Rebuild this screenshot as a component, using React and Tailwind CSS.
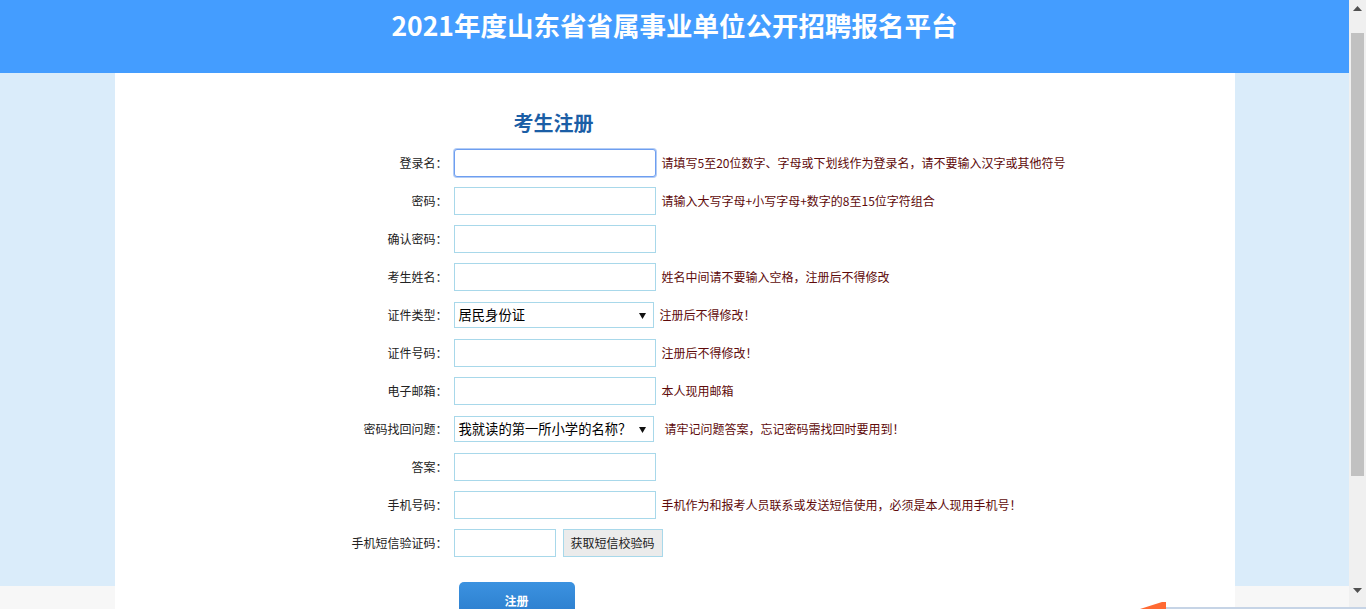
import React from 'react';

const rows = [
  { label: '登录名：', focus: true, hint: '请填写5至20位数字、字母或下划线作为登录名，请不要输入汉字或其他符号' },
  { label: '密码：', hint: '请输入大写字母+小写字母+数字的8至15位字符组合' },
  { label: '确认密码：' },
  { label: '考生姓名：', hint: '姓名中间请不要输入空格，注册后不得修改' },
  { label: '证件类型：', select: '居民身份证', hint: '注册后不得修改！' },
  { label: '证件号码：', hint: '注册后不得修改！' },
  { label: '电子邮箱：', hint: '本人现用邮箱' },
  { label: '密码找回问题：', select: '我就读的第一所小学的名称？', hint: '请牢记问题答案，忘记密码需找回时要用到！', wideGap: true },
  { label: '答案：' },
  { label: '手机号码：', hint: '手机作为和报考人员联系或发送短信使用，必须是本人现用手机号！' },
];

function Arrow({ down }) {
  return (
    <svg width="9" height="5" viewBox="0 0 9 5" className={down ? 'rotate-180' : ''}>
      <polygon points="4.5,0 9,5 0,5" fill="#505050" />
    </svg>
  );
}

function Row({ row }) {
  return (
    <div className="flex items-center h-[28px]">
      <div className="w-[333px] text-right text-[12px] text-[#222]">{row.label}</div>
      <div className="ml-[6px] flex items-center">
        {row.select ? (
          <div className="w-[200px] h-[26px] border border-[#a8d8ea] bg-white flex items-center justify-between pl-[4px] pr-[7px] text-[13.3px] text-black">
            <span>{row.select}</span>
            <svg width="7" height="7" viewBox="0 0 7 7"><polygon points="0,1 7,1 3.5,7" fill="#111" /></svg>
          </div>
        ) : (
          <input
            className={
              row.focus
                ? 'w-[202px] h-[28px] border border-[#6e9ef0] rounded-[3px] shadow-[0_0_0_1px_#b3cdf6] outline-none bg-white'
                : 'w-[202px] h-[28px] border border-[#a8d8ea] outline-none bg-white'
            }
          />
        )}
        {row.hint && (
          <span className={(row.wideGap ? 'ml-[11px]' : 'ml-[6px]') + ' text-[12px] text-[#5e0a0a] whitespace-nowrap'}>
            {row.hint}
          </span>
        )}
      </div>
    </div>
  );
}

export default function App() {
  return (
    <div className="relative flex h-[609px] w-full overflow-hidden bg-white font-['Noto_Sans_CJK_SC','Microsoft_YaHei',sans-serif]">
      <div className="flex-1 min-w-0 flex flex-col">
        {/* header */}
        <div className="h-[73px] shrink-0 bg-[#449dff] flex justify-center pt-[5px]">
          <h1 className="text-white font-bold text-[26.5px] leading-[40px]">2021年度山东省省属事业单位公开招聘报名平台</h1>
        </div>

        {/* body */}
        <div className="flex-1 bg-[linear-gradient(to_bottom,#daecfa_513px,#f7f7f7_513px)] flex justify-center">
          <div className="w-[1120px] bg-white pt-[35px]">
            <h2 className="pl-[399px] h-[30px] leading-[30px] text-[20px] font-bold text-[#1b5ea6] mb-[11px]">考生注册</h2>
            <div className="flex flex-col gap-[10px]">
              {rows.map((r) => (
                <Row key={r.label} row={r} />
              ))}
              <div className="flex items-center h-[28px]">
                <div className="w-[333px] text-right text-[12px] text-[#222]">手机短信验证码：</div>
                <input className="ml-[6px] w-[102px] h-[28px] border border-[#a8d8ea] outline-none bg-white" />
                <button className="ml-[7px] w-[100px] h-[28px] border border-[#a8d8ea] bg-[#ebebeb] text-[12px] text-[#222]">获取短信校验码</button>
              </div>
            </div>
            <div className="pl-[344px] mt-[25px]">
              <button className="w-[116px] h-[38px] rounded-[5px] bg-[linear-gradient(to_bottom,#3b92e0,#2a7bcb)] text-white text-[12px] font-bold flex items-center justify-center">注册</button>
            </div>
          </div>
        </div>
      </div>

      {/* scrollbar */}
      <div className="w-[17px] shrink-0 bg-[#f0f0f0] flex flex-col items-center">
        <div className="h-[17px] flex items-center justify-center"><Arrow /></div>
        <div className="mt-[16px] w-[13px] h-[443px] bg-[#c1c1c1]" />
        <div className="flex-1" />
        <div className="h-[17px] flex items-start justify-center pt-[2px] mb-[6px]"><Arrow down /></div>
      </div>

      {/* floating widget peeking from the bottom */}
      <div className="absolute left-[1140px] bottom-0 flex items-end">
        <svg width="26" height="7" viewBox="0 0 26 7"><polygon points="0,7 22,0 26,0 26,7" fill="#ff6a33" /></svg>
        <div className="w-[200px] h-[2px] bg-[#c6d4e6]" />
      </div>
    </div>
  );
}
